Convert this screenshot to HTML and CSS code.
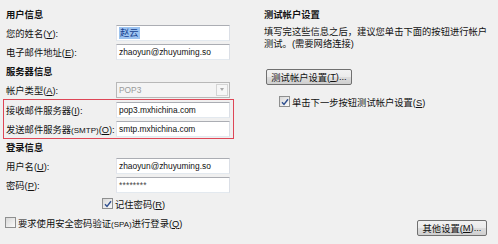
FILE: index.html
```html
<!DOCTYPE html>
<html lang="zh-CN">
<head>
<meta charset="utf-8">
<title>帐户设置</title>
<link rel="stylesheet" href="styles.css">
</head>
<body>
<div class="dialog">
  <div class="col-left">
    <div class="row heading">用户信息</div>
    <div class="row"><span class="lbl">您的姓名(<span class="ak">Y</span>):</span><span class="field"><span class="sel">赵云</span></span></div>
    <div class="row"><span class="lbl">电子邮件地址(<span class="ak">E</span>):</span><span class="field">zhaoyun@zhuyuming.so</span></div>
    <div class="row heading">服务器信息</div>
    <div class="row"><span class="lbl">帐户类型(<span class="ak">A</span>):</span><span class="field select"><span class="sel-text">POP3</span><span class="drop"><span class="arrow"></span></span></span></div>
    <div class="highlight">
      <div class="row"><span class="lbl">接收邮件服务器(<span class="ak">I</span>):</span><span class="field">pop3.mxhichina.com</span></div>
      <div class="row"><span class="lbl">发送邮件服务器<span class="latin">(SMTP)</span>(<span class="ak">O</span>):</span><span class="field">smtp.mxhichina.com</span></div>
    </div>
    <div class="row heading">登录信息</div>
    <div class="row"><span class="lbl">用户名(<span class="ak">U</span>):</span><span class="field">zhaoyun@zhuyuming.so</span></div>
    <div class="row"><span class="lbl">密码(<span class="ak">P</span>):</span><span class="field pwd">********</span></div>
    <div class="row remember"><span class="cb"><svg class="tick" width="8" height="8" viewBox="0 0 8 8"><path d="M1 4.2 L3 6.4 L7 1.2" fill="none" stroke="#2f4f8f" stroke-width="1.4"/></svg></span><span>记住密码(<span class="ak">R</span>)</span></div>
    <div class="row spa"><span class="cb"></span><span>要求使用安全密码验证<span class="latin">(SPA)</span>进行登录(<span class="ak">Q</span>)</span></div>
  </div>
  <div class="col-right">
    <div class="row heading">测试帐户设置</div>
    <p class="desc">填写完这些信息之后，建议您单击下面的按钮进行帐户测试。(需要网络连接)</p>
    <button class="btn btn-test" type="button">测试帐户设置(<span class="ak">T</span>)...</button>
    <div class="row next"><span class="cb"><svg class="tick" width="8" height="8" viewBox="0 0 8 8"><path d="M1 4.2 L3 6.4 L7 1.2" fill="none" stroke="#2f4f8f" stroke-width="1.4"/></svg></span><span>单击下一步按钮测试帐户设置(<span class="ak">S</span>)</span></div>
    <button class="btn btn-more" type="button">其他设置(<span class="ak">M</span>)...</button>
  </div>
</div>
</body>
</html>
```

FILE: styles.css
```css
* { box-sizing: border-box; }
html, body { margin: 0; padding: 0; }
body {
  background: #f0f0f0;
  font-family: "Liberation Sans", "Noto Sans CJK SC", sans-serif;
  font-size: 9.3px;
  color: #111;
  width: 498px;
  height: 244px;
  overflow: hidden;
}
.dialog {
  display: flex;
  padding: 4px 0 0 6px;
  height: 244px;
}
.col-left {
  width: 258px;
  flex: none;
  display: flex;
  flex-direction: column;
}
.row {
  height: 19px;
  flex: none;
  display: flex;
  align-items: center;
  white-space: nowrap;
}
.heading { font-weight: bold; }
.lbl { width: 110px; flex: none; }
.latin { font-size: 8px; }
.ak { text-decoration: underline; }
.field {
  width: 114px;
  height: 16px;
  flex: none;
  display: flex;
  align-items: center;
  padding-left: 2px;
  background: #fff;
  border: 1px solid;
  border-color: #abadb3 #dbdfe6 #e3e9ef #e2e3ea;
  font-size: 8.4px;
  color: #111;
}
.sel {
  background: #9cc3f0;
  color: #143f8f;
  font-size: 9.3px;
  padding: 0 1px;
  line-height: 12px;
}
.pwd { letter-spacing: 0.2px; color: #444; }
.select {
  background: #f4f4f4;
  border-color: #b8b8b8;
  justify-content: space-between;
  padding-right: 1px;
}
.sel-text { color: #9a9a9a; }
.drop {
  width: 12px;
  height: 12px;
  border: 1px solid #d4d4d4;
  background: #f6f6f6;
  display: flex;
  align-items: center;
  justify-content: center;
}
.arrow {
  width: 0;
  height: 0;
  border-left: 2.5px solid transparent;
  border-right: 2.5px solid transparent;
  border-top: 3px solid #a8a8a8;
}
.highlight {
  margin: 0 0 -2px -3px;
  width: 231px;
  border: 1px solid #de4656;
  padding-left: 2px;
}
.cb {
  width: 11px;
  height: 11px;
  flex: none;
  border: 1px solid #8e8f8f;
  background: linear-gradient(135deg, #d8d8d8, #fbfbfb);
  margin-right: 2px;
  display: flex;
  align-items: center;
  justify-content: center;
}
.remember { padding-left: 96px; }
.spa { margin-left: -1px; }
.col-right {
  width: 228px;
  flex: none;
  display: flex;
  flex-direction: column;
}
.desc {
  margin: 3px 0 0;
  line-height: 12px;
  width: 226px;
}
.btn {
  font-family: "Liberation Sans", "Noto Sans CJK SC", sans-serif;
  font-size: 9.3px;
  color: #111;
  height: 16px;
  padding: 0;
  border: 1px solid #707070;
  border-radius: 2px;
  background: linear-gradient(#f2f2f2 0%, #ebebeb 50%, #dddddd 51%, #cfcfcf 100%);
  display: flex;
  align-items: center;
  justify-content: center;
  white-space: nowrap;
}
.btn-test {
  width: 86px;
  margin: 19px 0 0 2px;
}
.next {
  margin-top: 7px;
  padding-left: 15px;
}
.btn-more {
  width: 70px;
  margin: auto 5px 8px 0;
  align-self: flex-end;
}
```
